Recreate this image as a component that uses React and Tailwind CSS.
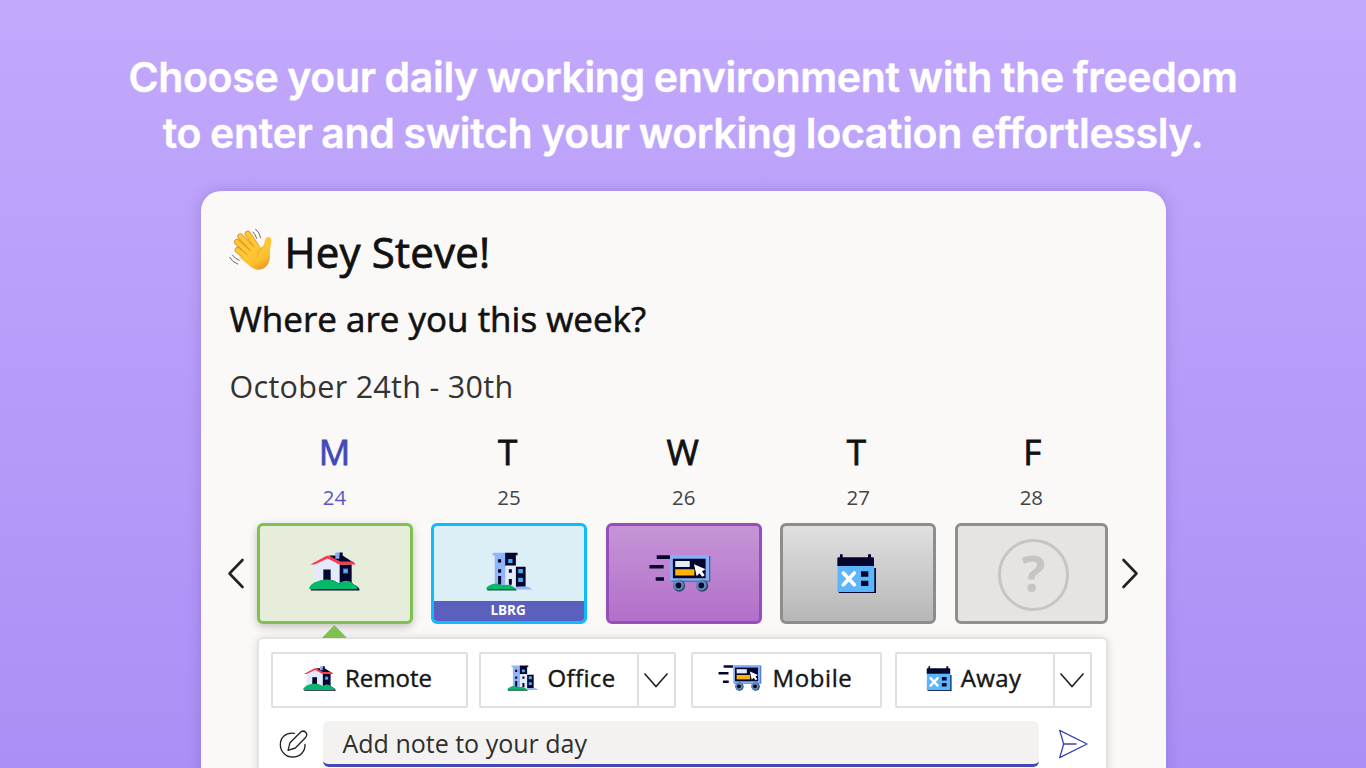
const sans = "font-['Open_Sans','Noto_Sans',sans-serif]";

const days = [
    { letter: 'M', date: 24, width: 'w-[156px]', nudge: '', place: 'remote', active: true },
    { letter: 'T', date: 25, width: 'w-[156px]', nudge: 'pr-[3px]', place: 'office' },
    { letter: 'W', date: 26, width: 'w-[156px]', nudge: 'pr-0.5', place: 'mobile' },
    { letter: 'T', date: 27, width: 'w-[156px]', nudge: 'pr-1', place: 'away' },
    { letter: 'F', date: 28, width: 'w-[153px]', nudge: 'pl-0.5', place: 'unknown' },
];

const tiles = {
    remote: 'bg-[#e6edda] border-[#80c04f] shadow-[0_3px_8px_rgba(0,0,0,0.22)]',
    office: 'bg-[#dceff6] border-[#0dbcfd]',
    mobile: 'bg-linear-to-b from-[#c595d6] to-[#b46fca] border-[#964fb8]',
    away: 'bg-linear-to-b from-[#e0e0e0] to-[#b7b7b7] border-[#8d8d8d]',
    unknown: 'bg-[#e5e4e2] border-[#8f8f8e]',
};

export default function App() {
    return (
        <div className={`w-[1366px] h-[768px] overflow-hidden flex flex-col items-center bg-linear-to-b from-[#c2a9fc] to-[#ab8ff6] ${sans}`}>
            <h1 className="mt-[49px] h-28 shrink-0 text-center whitespace-nowrap text-white font-semibold text-[41px] leading-[56px] [word-spacing:-1px] [-webkit-text-stroke:0.4px_white] font-['Inter',sans-serif]">
                <span className="block tracking-[-0.35px]">Choose your daily working environment with the freedom</span>
                <span className="block tracking-[-0.33px]">to enter and switch your working location effortlessly.</span>
            </h1>

            <main className="mt-[30px] w-[965px] h-[620px] shrink-0 rounded-[20px] bg-[#faf9f8] pt-[37px] shadow-[0_0_14px_rgba(80,50,140,0.25)]">
                <div className="pl-[29px] whitespace-nowrap text-[#111]">
                    <div className="flex h-12">
                        <Wave className="-ml-px w-[44px] h-[43px] shrink-0" />
                        <h2 className="ml-3 text-[42px] leading-[47px] tracking-[0.2px] [-webkit-text-stroke:0.8px_#111]">Hey Steve!</h2>
                    </div>
                    <h3 className="mt-[19px] text-[35px] leading-12 [-webkit-text-stroke:0.6px_#111]">Where are you this week?</h3>
                    <p className="mt-[23px] text-[30.5px] leading-10 tracking-[0.3px] text-[#333]">October 24th - 30th</p>
                </div>

                <div className="mt-[25px] flex">
                    <Chevron className="mt-[127px] ml-[26px] w-[18px] h-[31px] shrink-0" d="M15.5 2 2.5 15.5 15.5 29" />
                    <div className="ml-3 flex gap-[18.6px]">
                        {days.map((day) => (
                            <Day key={day.date} day={day} />
                        ))}
                    </div>
                    <Chevron className="mt-[127px] ml-[13px] w-[18px] h-[31px] shrink-0" d="M2.5 2 15.5 15.5 2.5 29" />
                </div>

                <section className="mt-[13px] ml-[56px] w-[851px] h-[150px] rounded-md bg-white border-2 border-[#e4e3e2] shadow-[0_1px_10px_rgba(0,0,0,0.13)]">
                    <div className="mt-[13px] ml-3 flex">
                        <Choice width="w-[197px]" gap="gap-[9px] pr-[3px]" label="Remote" icon={<House className="w-[33px] h-[25px]" />} />
                        <Choice width="w-[197px] ml-[11px]" gap="gap-[9px] pl-1.5 tracking-[0.4px]" label="Office" menu icon={<Office className="w-[31px] h-[26px]" />} />
                        <Choice width="w-[191px] ml-[15px]" gap="gap-[11px] pr-0.5 tracking-[0.6px]" label="Mobile" icon={<Van className="w-[44px] h-[26px]" />} />
                        <Choice width="w-[197px] ml-[13px]" gap="gap-[9px] pr-0.5 tracking-[0.4px]" label="Away" menu icon={<Calendar className="w-[26px] h-[25px]" />} />
                    </div>
                    <div className="mt-[13px] flex">
                        <Pencil className="mt-[9px] ml-[20px] w-[30px] h-[29px]" />
                        <div className="ml-[14px] w-[716px] h-[46px] rounded-md bg-[#f3f2f1] border-b-3 border-[#4446b8] pl-5 text-[25px] leading-[45px] text-[#2e2e2e]">
                            Add note to your day
                        </div>
                        <Send className="mt-2 ml-[19px] w-[31px] h-[30px]" />
                    </div>
                </section>
            </main>
        </div>
    );
}

function Day({ day }) {
    return (
        <div className={`relative shrink-0 text-center ${day.width}`}>
            <div className={`h-10 text-[35px] leading-[42px] ${day.nudge} ${day.active ? 'text-[#4549b5] [-webkit-text-stroke:0.8px_#4549b5]' : 'text-[#111] [-webkit-text-stroke:0.8px_#111]'}`}>{day.letter}</div>
            <div className={`mt-3 h-7 text-[20.5px] leading-7 ${day.active ? 'text-[#5559c0]' : 'text-[#444]'}`}>{day.date}</div>
            <div className={`mt-3 h-[101px] rounded-md border-3 overflow-hidden flex flex-col items-center ${tiles[day.place]}`}>
                {day.place === 'remote' && <House className="mt-[26px] w-[51px] h-[39px]" />}
                {day.place === 'office' && (
                    <>
                        <Office className="mt-[26px] w-[46px] h-[39px] shrink-0" />
                        <div className="mt-auto w-full h-5 shrink-0 bg-[#5b5fbd] pr-0.5 text-white text-[13.5px] leading-[19px] font-bold">LBRG</div>
                    </>
                )}
                {day.place === 'mobile' && <Van className="mt-[29px] mr-2 w-[62px] h-[37px]" />}
                {day.place === 'away' && <Calendar className="mt-[28px] mr-1 w-[39px] h-[39px]" />}
                {day.place === 'unknown' && (
                    <div className="mt-[13px] ml-1 w-[71px] h-[72px] rounded-full border-3 border-[#c6c5c4] text-[#c6c5c4] text-[50px] leading-[62px] font-bold">?</div>
                )}
            </div>
            {day.active && (
                <svg className="absolute left-[65px] top-[194px] w-[25px] h-[13px]" viewBox="0 0 25 13">
                    <path d="M12.3 0 25 13H0z" fill="#80c04f" />
                </svg>
            )}
        </div>
    );
}

function Choice({ width, gap, label, icon, menu }) {
    return (
        <div className={`flex shrink-0 h-14 rounded-xs border-2 border-[#e1e0df] ${width}`}>
            <div className={`grow flex items-center justify-center pb-1 text-[24px] text-[#161616] [-webkit-text-stroke:0.4px_#161616] ${gap}`}>
                {icon}
                <span className="leading-8">{label}</span>
            </div>
            {menu && (
                <div className="w-[37px] border-l-2 border-[#e1e0df] flex items-center justify-center">
                    <svg className="w-[26px] h-4" viewBox="0 0 26 16" fill="none" stroke="#222" strokeWidth="1.6">
                        <path d="M1.5 1.5 13 14.5 24.5 1.5" />
                    </svg>
                </div>
            )}
        </div>
    );
}

function Chevron({ d, className }) {
    return (
        <svg className={className} viewBox="0 0 18 31" fill="none" stroke="#222" strokeWidth="2.6" strokeLinecap="round" strokeLinejoin="round">
            <path d={d} />
        </svg>
    );
}

function House({ className }) {
    return (
        <svg className={className} viewBox="0 0 153 116">
            <path d="M60 10h41l38 25H92z" fill="#05062d" />
            <path d="M91 1h10v26H91z" fill="#05062d" />
            <path d="M79 3q0-2 3-2h9v19H79z" fill="#82b1f5" />
            <path d="M16 35 55 15l38 21v65H16z" fill="#e3ebfb" />
            <path d="M92 37h36v57H92z" fill="#05062d" />
            <path d="M43 52h22v40H43z" fill="#05062d" />
            <path d="M102 49h15v15h-15z" fill="#2c7fc4" />
            <path d="M105 52h10v9h-10z" fill="#62b7fb" />
            <path d="M4 37 53 11h6l35 17h38l8 9H91L56 19 17 37z" fill="#fb3a50" />
            <path d="M6 115c-3-10 15-31 49-33 16 0 27 7 35 12 14-12 34-10 44 3 9 3 20 12 17 18z" fill="#05062d" />
            <path d="M1 111c-3-11 20-29 54-29 16 0 27 7 35 12 14-12 34-10 44 3 8 3 12 7 12 14z" fill="#06b86a" />
        </svg>
    );
}

function Office({ className }) {
    return (
        <svg className={className} viewBox="0 0 137 115">
            <path d="M20 2h38v101H26V10h-6z" fill="#90b5f8" />
            <path d="M57 2h37v7h-5v32H57z" fill="#05062d" />
            <path d="M58 40h31v63H58z" fill="#e3ebfb" />
            <path d="M89 43h29v60H89z" fill="#05062d" />
            <path d="M66 20h13v12H66zM96 50h14v13H96zM96 76h14v13H96z" fill="#4ba9ec" />
            <path d="M36 21h9v10h-9zM36 51h9v10h-9zM36 71h9v25h-9zM68 51h9v10h-9zM68 80h9v17h-9z" fill="#05062d" />
            <path d="M87 111v-5q4-4 33-4 12 1 17 9z" fill="#90b5f8" />
            <path d="M4 114q-3-8 10-15 18-10 32 1 18-6 32 2 10 4 14 12z" fill="#085a3b" />
            <path d="M1 110q-1-6 13-13 18-7 32 3 18-6 30 0 9 4 11 10z" fill="#06b86a" />
        </svg>
    );
}

function Van({ className }) {
    return (
        <svg className={className} viewBox="0 0 185 112">
            <path d="M22 1h40v11H22zM0 30h43v11H0zM19 67h25v11H19z" fill="#05062d" />
            <path d="M67 3h117v77H67z" fill="#2c4b86" />
            <path d="M63 1h118v77H63z" fill="#83b0f6" />
            <path d="M71 11h99v59H71z" fill="#05062d" />
            <path d="M78 18h44v18H78z" fill="#e3ebfb" />
            <path d="M78 43h58v19H78z" fill="#ffb20a" />
            <path d="m135 28 35 15-11 6 8 12-7 5-9-11-8 9z" fill="#fff" />
            <circle cx="90" cy="93" r="18" fill="#29466f" />
            <circle cx="88" cy="91" r="16" fill="#5f89b5" />
            <circle cx="88" cy="92" r="8.5" fill="#05062d" />
            <circle cx="160" cy="93" r="18" fill="#29466f" />
            <circle cx="157" cy="91" r="16" fill="#5f89b5" />
            <circle cx="157" cy="92" r="8.5" fill="#05062d" />
        </svg>
    );
}

function Calendar({ className }) {
    return (
        <svg className={className} viewBox="0 0 117 117">
            <path d="M5 42h112v75H7q-2 0-2-3z" fill="#05062d" />
            <path d="M2 34h110v77q0 3-3 3H4q-3 0-3-3z" fill="#5db6fc" />
            <path d="M1 14q0-4 4-4h4V1h8v9h76V1h9v9h5q4 0 4 4v22H1z" fill="#05062d" />
            <path d="m19 57 33 35m0-35L19 92" stroke="#fff" strokeWidth="11" strokeLinecap="round" />
            <path d="M72 52h22v16H72zM72 80h22v16H72z" fill="#05062d" />
        </svg>
    );
}

function Pencil({ className }) {
    return (
        <svg className={className} viewBox="0 0 90 87" fill="none" stroke="#222" strokeWidth="4" strokeLinecap="round" strokeLinejoin="round">
            <path d="M46 10C20 6 3 24 4 46c1 20 17 35 37 35 22 0 38-16 37-38" />
            <path d="m27 61 6-23L63 8c5-5 12-6 17-1s4 11-1 16L49 54z" />
        </svg>
    );
}

function Send({ className }) {
    return (
        <svg className={className} viewBox="0 0 93 90" fill="none" stroke="#3d41b8" strokeWidth="4" strokeLinecap="round" strokeLinejoin="round">
            <path d="m5 4 82 41L5 86l12-41z" />
            <path d="M17 45h37" />
        </svg>
    );
}

const fingers = ['M26 66 62 96', 'M24 42 64 78', 'M34 25 72 64', 'M56 17 84 58'];

function Wave({ className }) {
    return (
        <svg className={className} viewBox="0 0 132 129" fill="none" strokeLinecap="round">
            <defs>
                <linearGradient id="palm" x1="0.1" y1="0" x2="0.7" y2="1">
                    <stop offset="0" stopColor="#ffcf3f" />
                    <stop offset="0.75" stopColor="#fdc02f" />
                    <stop offset="1" stopColor="#ea9a20" />
                </linearGradient>
            </defs>
            {fingers.map((d) => (
                <g key={d}>
                    <path d={d} stroke="#dc9118" strokeWidth="18" />
                    <path d={d} stroke="#ffc636" strokeWidth="13" />
                </g>
            ))}
            <path
                d="M50 88 84 48c6 9 11 13 16 9 6-6 5-15 10-24 4-9 17-7 17 3 0 12-5 24-4 38 1 20-2 36-17 46-14 8-28 6-40-3L30 87c6-2 14 3 20 1z"
                fill="url(#palm)"
            />
            <path d="M38 76 62 96M42 58l24 22M51 43l22 23M68 34l18 26" stroke="#ffc636" strokeWidth="12" />
            <path d="M100 58c-9 6-13 13-14 22" stroke="#e9a320" strokeWidth="3" />
            <path d="M80 4q11 8 15 25M72 12q8 8 11 19M10 81q7 11 21 16M2 88q8 15 24 20" stroke="#68676a" strokeWidth="3" />
        </svg>
    );
}
